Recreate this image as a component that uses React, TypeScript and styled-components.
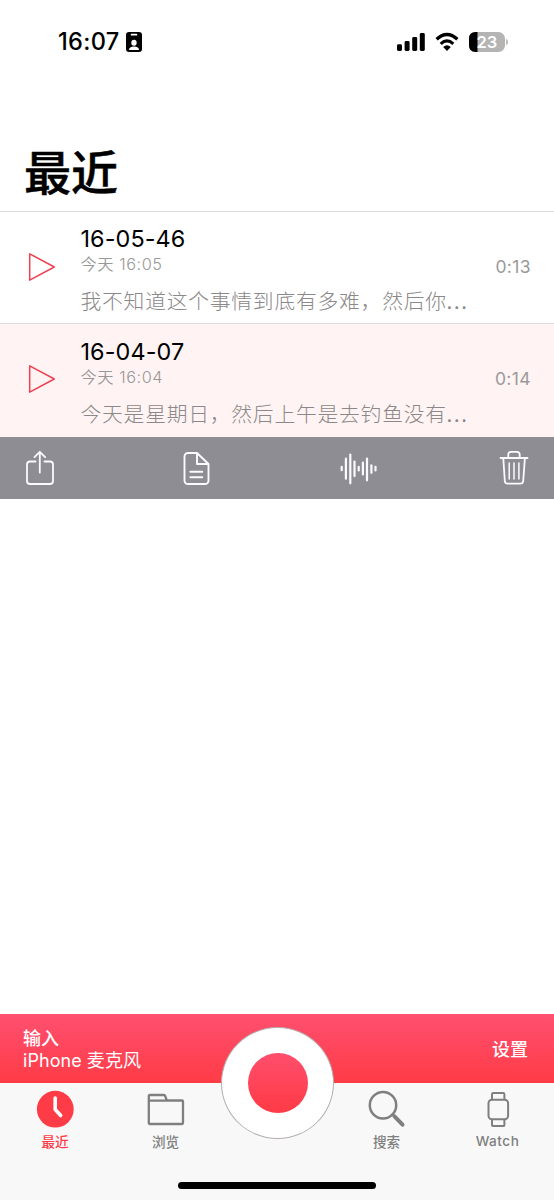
import React from 'react';
import styled, { createGlobalStyle } from 'styled-components';

const GlobalStyle = createGlobalStyle`
  * { box-sizing: border-box; }
  html, body { margin: 0; padding: 0; background: #fff; }
  body { font-family: Inter, "Noto Sans CJK SC", sans-serif; color: #000; }
  svg { display: block; flex: none; overflow: visible; }
`;

const Screen = styled.div`
  width: 554px;
  height: 1200px;
  display: flex;
  flex-direction: column;
  overflow: hidden;
  background: #fff;
`;

const StatusBar = styled.div`
  height: 84px;
  padding: 0 46px 0 58px;
  display: flex;
  align-items: center;
`;

const Clock = styled.span`
  width: 68px;
  font-size: 23.6px;
  font-weight: 530;
  letter-spacing: 0.3px;
  line-height: 28px;
  white-space: nowrap;
`;

const StatusIcons = styled.div`
  margin-left: auto;
  display: flex;
  align-items: center;
  gap: 10px;
`;

const Header = styled.header`
  height: 128px;
  padding: 54px 24px 0;
  border-bottom: 1px solid #dcdcdc;
`;

const Title = styled.h1`
  margin: 0;
  font-size: 47px;
  line-height: 70px;
  font-weight: 500;
  -webkit-text-stroke: 0.5px #000;
`;

const Row = styled.div<{ $selected?: boolean; $height: number }>`
  height: ${(p) => p.$height}px;
  display: flex;
  align-items: center;
  padding: 0 23px ${(p) => (p.$selected ? 3 : 2)}px 28px;
  background: ${(p) => (p.$selected ? '#fff4f3' : '#fff')};
  border-bottom: ${(p) => (p.$selected ? 'none' : '1px solid #dcdadb')};
`;

const RowBody = styled.div`
  width: 400px;
  margin-left: 24.5px;
  padding-top: 8px;
  display: flex;
  flex-direction: column;
`;

const RowName = styled.div`
  font-size: 23.4px;
  line-height: 29px;
  letter-spacing: 0.1px;
  white-space: nowrap;
`;

const RowDate = styled.div`
  font-size: 16.3px;
  line-height: 22px;
  letter-spacing: 0.55px;
  font-weight: 360;
  color: #989898;
  white-space: nowrap;
`;

const RowPreview = styled.div`
  margin-top: 12px;
  font-size: 20.8px;
  line-height: 30px;
  letter-spacing: 0.75px;
  font-weight: 300;
  color: #8a8888;
  white-space: nowrap;
`;

const Ellipsis = styled.span`
  font-size: 26px;
  line-height: 1;
  margin-left: -1px;
`;

const Duration = styled.div`
  margin-left: auto;
  font-size: 17.5px;
  line-height: 22px;
  letter-spacing: 0.4px;
  font-weight: 370;
  color: #9a9a9a;
`;

const ActionBar = styled.div`
  height: 62px;
  padding: 0 24px;
  display: grid;
  grid-template-columns: 157.5px 157.5px 159px 32px;
  align-items: center;
  background: #8e8d93;
`;

const Empty = styled.main`
  flex: 1;
`;

const Footer = styled.footer`
  position: relative;
`;

const InputBanner = styled.div`
  height: 69px;
  padding: 2px 26px 0 23px;
  display: flex;
  align-items: center;
  justify-content: space-between;
  color: #fff;
  background: linear-gradient(#ff5070, #ff3b46);
`;

const InputLabel = styled.div`
  font-size: 18px;
  line-height: 22px;
  font-weight: 500;
`;

const InputName = styled.div`
  font-size: 18px;
  line-height: 22px;
  letter-spacing: 0.05px;
`;

const TabBar = styled.nav`
  height: 117px;
  display: grid;
  grid-template-columns: 110px 111px 111px 109px 113px;
  grid-template-rows: 97px 20px;
  background: #f8f8f8;
`;

const Tab = styled.div<{ $active?: boolean }>`
  display: flex;
  flex-direction: column;
  align-items: center;
  padding-top: 6px;
  color: ${(p) => (p.$active ? '#ff3b47' : '#7f7f7f')};
`;

const TabLabel = styled.span<{ $latin?: boolean }>`
  margin-top: ${(p) => (p.$latin ? 2 : 3)}px;
  font-size: 13.6px;
  line-height: 20px;
  letter-spacing: ${(p) => (p.$latin ? 0.5 : 0)}px;
  font-weight: ${(p) => (p.$latin ? 450 : 500)};
`;

const HomeIndicator = styled.div`
  grid-column: 1 / -1;
  justify-self: center;
  width: 198px;
  height: 7px;
  margin-top: 2px;
  border-radius: 4px;
  background: #000;
`;

const RecordButton = styled.div`
  position: absolute;
  left: 221px;
  top: 13px;
  width: 113px;
  height: 112px;
  border: 1px solid #b5aeb0;
  border-radius: 50%;
  background: #fff;
  display: flex;
  align-items: center;
  justify-content: center;
`;

const RecordDot = styled.div`
  width: 60px;
  height: 60px;
  border-radius: 50%;
  background: linear-gradient(#ff4e6d, #ff3a45);
`;

const BadgeIcon = () => (
  <svg width="16" height="20" viewBox="0 0 16 20">
    <rect width="16" height="20" rx="3" fill="#000" />
    <rect x="4.7" y="1.8" width="6.6" height="1.8" rx="0.9" fill="#fff" />
    <ellipse cx="8" cy="10.8" rx="2.7" ry="3" fill="#fff" />
    <path d="M3 18q0-3 5-3.4q5 .4 5 3.4z" fill="#fff" />
  </svg>
);

const SignalIcon = () => (
  <svg width="28" height="18" viewBox="0 0 28 18">
    <rect x="0" y="11.2" width="5" height="6.8" rx="1.4" />
    <rect x="7.6" y="8" width="5" height="10" rx="1.4" />
    <rect x="15.2" y="4" width="5" height="14" rx="1.4" />
    <rect x="22.8" y="0" width="5" height="18" rx="1.4" />
  </svg>
);

const WifiIcon = () => (
  <svg width="24" height="18" viewBox="0 0 24 18">
    <path d="M1.6 6.2Q12-3.4 22.4 6.2" fill="none" stroke="#000" strokeWidth="3.3" />
    <path d="M5.7 10.8Q12 5 18.3 10.8" fill="none" stroke="#000" strokeWidth="3" />
    <path d="M8.2 13.9Q12 10.7 15.8 13.9L12 17.9z" />
  </svg>
);

const BatteryIcon = () => (
  <svg width="39" height="20" viewBox="0 0 39 20">
    <rect width="36" height="20" rx="6.5" fill="#b4b4b4" />
    <path d="M8.5 0H6.5Q0 0 0 6.5v7Q0 20 6.5 20h2z" />
    <path d="M37.2 6.5q1.8 1 1.8 3.5t-1.8 3.5z" fill="#b4b4b4" />
    <text x="17.8" y="15.9" fill="#fff" textAnchor="middle" fontFamily="Inter, sans-serif" fontSize="16.5" fontWeight="600">23</text>
  </svg>
);

const PlayIcon = () => (
  <svg width="28" height="30" viewBox="0 0 28 30">
    <path d="M1.7 1.8v26.4L26.3 15z" fill="none" stroke="#ee4050" strokeWidth="1.5" strokeLinejoin="round" />
  </svg>
);

const ShareIcon = () => (
  <svg width="32" height="36" viewBox="0 0 32 36" fill="none" stroke="#fafaff" strokeWidth="1.8" strokeLinecap="round" strokeLinejoin="round">
    <path d="M11.5 11.5H6a3 3 0 0 0-3 3V31a3 3 0 0 0 3 3h20a3 3 0 0 0 3-3V14.5a3 3 0 0 0-3-3h-5.5M15.8 22.5V2M10.5 7.2L15.8 1.8l5.3 5.4" />
  </svg>
);

const DocumentIcon = () => (
  <svg width="28" height="34" viewBox="0 0 28 34" fill="none" stroke="#fafaff" strokeWidth="1.9" strokeLinecap="round" strokeLinejoin="round">
    <path d="M15 2H6A3.5 3.5 0 0 0 2.5 5.500v24A3.5 3.5 0 0 0 6 33h17A3.5 3.5 0 0 0 26.5 29.500V13zM15 2V13H26.5M8.3 20.800h12M8.3 26.300h12" />
  </svg>
);

const BARS: [number, number, number][] = [
  [2.7, 13.8, 17.2],
  [6.9, 5.7, 25.7],
  [11.3, 1.5, 30.3],
  [15.5, 8.5, 23.1],
  [19.7, 13.8, 17.5],
  [23.9, 9.7, 21.5],
  [28, 5.5, 27.3],
  [32.4, 12.3, 19.8],
  [36.5, 13.8, 17.5],
];

const WaveIcon = () => (
  <svg width="38" height="31" viewBox="0 0 38 31" stroke="#fafaff" strokeWidth="2.2" strokeLinecap="round">
    {BARS.map(([x, y1, y2]) => (
      <line key={x} x1={x} x2={x} y1={y1} y2={y2} />
    ))}
  </svg>
);

const TrashIcon = () => (
  <svg width="32" height="36" viewBox="0 0 32 36" fill="none" stroke="#fafaff" strokeWidth="1.8" strokeLinecap="round" strokeLinejoin="round">
    <path d="M2.5 8h27M10.3 7.8V4.6a2.8 2.8 0 0 1 2.8-2.8h5.8a2.8 2.8 0 0 1 2.8 2.800v3.200M5.3 8.300l1.500 22.700a3 3 0 0 0 3 2.700h12.400a3 3 0 0 0 3-2.700L26.900 8.300" />
    <path d="M11.2 13v16M16 13v16M20.9 13v16" strokeWidth="1.5" />
  </svg>
);

const ClockIcon = () => (
  <svg width="40" height="40" viewBox="0 0 40 40">
    <circle cx="20.3" cy="20.2" r="18.4" fill="#ff3b47" />
    <path d="M20.2 9V20.5l5.5 6" fill="none" stroke="#fff" strokeWidth="3.6" strokeLinecap="round" strokeLinejoin="round" />
  </svg>
);

const FolderIcon = () => (
  <svg width="40" height="40" viewBox="0 0 40 40" fill="none" stroke="#7f7f7f" strokeWidth="2.3" strokeLinejoin="round">
    <path d="M2.8 12V7a1 1 0 0 1 1-1h14a1.5 1.5 0 0 1 1.4 1l1.6 4.5h15.200a1 1 0 0 1 1 1v21.500a1 1 0 0 1-1 1H3.800a1 1 0 0 1-1-1zM2.800 11.600h19" />
  </svg>
);

const SearchIcon = () => (
  <svg width="40" height="40" viewBox="0 0 40 40" fill="none" stroke="#7f7f7f" strokeLinecap="round">
    <circle cx="16" cy="16.2" r="13.2" strokeWidth="2.5" />
    <path d="M25.5 25.4l1.5 1.5" strokeWidth="2.5" />
    <path d="M27.5 27.4l8 8.3" strokeWidth="4" />
  </svg>
);

const WatchIcon = () => (
  <svg width="40" height="40" viewBox="0 0 40 40" fill="none" stroke="#7f7f7f" strokeWidth="2" strokeLinejoin="round">
    <rect x="10.5" y="10.7" width="19.6" height="19.6" rx="3.5" />
    <path d="M14 10.5V5.3a1.2 1.2 0 0 1 1.2-1.2h10a1.2 1.2 0 0 1 1.2 1.2V10.5M14 30.5v5.4a1.2 1.2 0 0 0 1.2 1.2h10a1.2 1.2 0 0 0 1.2-1.2v-5.4" />
  </svg>
);

const RECORDINGS = [
  { name: '16-05-46', date: '今天 16:05', preview: '我不知道这个事情到底有多难，然后你', duration: '0:13', height: 112 },
  { name: '16-04-07', date: '今天 16:04', preview: '今天是星期日，然后上午是去钓鱼没有', duration: '0:14', height: 113, selected: true },
];

export default function App() {
  return (
    <>
      <GlobalStyle />
      <Screen>
        <StatusBar>
          <Clock>16:07</Clock>
          <BadgeIcon />
          <StatusIcons>
            <SignalIcon />
            <WifiIcon />
            <BatteryIcon />
          </StatusIcons>
        </StatusBar>
        <Header>
          <Title>最近</Title>
        </Header>
        {RECORDINGS.map((r) => (
          <Row key={r.name} $selected={r.selected} $height={r.height}>
            <PlayIcon />
            <RowBody>
              <RowName>{r.name}</RowName>
              <RowDate>{r.date}</RowDate>
              <RowPreview>
                {r.preview}
                <Ellipsis>…</Ellipsis>
              </RowPreview>
            </RowBody>
            <Duration>{r.duration}</Duration>
          </Row>
        ))}
        <ActionBar>
          <ShareIcon />
          <DocumentIcon />
          <WaveIcon />
          <TrashIcon />
        </ActionBar>
        <Empty />
        <Footer>
          <InputBanner>
            <div>
              <InputLabel>输入</InputLabel>
              <InputName>iPhone 麦克风</InputName>
            </div>
            <InputLabel>设置</InputLabel>
          </InputBanner>
          <TabBar>
            <Tab $active>
              <ClockIcon />
              <TabLabel>最近</TabLabel>
            </Tab>
            <Tab>
              <FolderIcon />
              <TabLabel>浏览</TabLabel>
            </Tab>
            <span />
            <Tab>
              <SearchIcon />
              <TabLabel>搜索</TabLabel>
            </Tab>
            <Tab>
              <WatchIcon />
              <TabLabel $latin>Watch</TabLabel>
            </Tab>
            <HomeIndicator />
          </TabBar>
          <RecordButton>
            <RecordDot />
          </RecordButton>
        </Footer>
      </Screen>
    </>
  );
}
